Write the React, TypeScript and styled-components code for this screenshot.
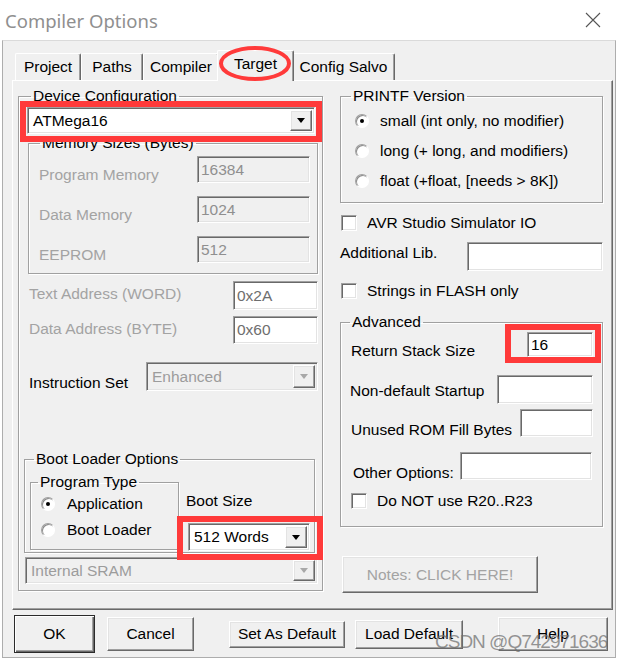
import React from "react";
import styled, { createGlobalStyle, css } from "styled-components";

const RED = "#ff3a3a";

const GlobalStyle = createGlobalStyle`
  * { box-sizing: border-box; }
  html, body { margin: 0; padding: 0; background: #fff; }
  body {
    font-family: "Liberation Sans", Arial, sans-serif;
    font-size: 15.5px;
    color: #000;
  }
`;

const sunken = css`
  border: 1px solid;
  border-color: #a0a0a0 #fff #fff #a0a0a0;
  box-shadow: inset 1px 1px 0 #696969, inset -1px -1px 0 #e3e3e3;
`;

const raised = css`
  border: 1px solid;
  border-color: #fff #696969 #696969 #fff;
  box-shadow: inset -1px -1px 0 #a0a0a0, inset 1px 1px 0 #e3e3e3;
`;

const Window = styled.div`
  position: relative;
  width: 619px;
  height: 661px;
  display: flex;
  flex-direction: column;
  background: #fff;
  overflow: hidden;
`;

const TitleBar = styled.div`
  height: 40px;
  flex: none;
  display: flex;
  align-items: center;
  justify-content: space-between;
  padding: 0 18px 0 5px;
`;

const Title = styled.span`
  font-family: "Noto Sans", "Liberation Sans", sans-serif;
  font-size: 18.5px;
  color: #8f8f8f;
`;

const CloseGlyph = styled.svg`
  width: 16px;
  height: 16px;
  stroke: #555;
  stroke-width: 1.1;
`;

const Client = styled.div`
  flex: 1;
  margin: 0 3px 3px 2px;
  background: #f0f0f0;
  border: 1px solid #adadad;
  border-top-color: #dadada;
  display: flex;
  flex-direction: column;
  padding: 9px 0 0 9px;
`;

const TabStrip = styled.div`
  display: flex;
  align-items: flex-end;
  height: 30px;
  padding-left: 3px;
`;

const Tab = styled.div<{ $w: number; $active?: boolean }>`
  position: relative;
  z-index: ${(p) => (p.$active ? 2 : 0)};
  flex: none;
  width: ${(p) => p.$w}px;
  height: ${(p) => (p.$active ? 31 : 27)}px;
  margin: ${(p) => (p.$active ? "0 -2px -1px" : "0")};
  padding-bottom: ${(p) => (p.$active ? 4 : 0)}px;
  display: flex;
  align-items: center;
  justify-content: center;
  background: #f0f0f0;
  border-top: 1px solid #fff;
  border-left: 1px solid #fff;
  border-right: 1px solid #696969;
  border-radius: 2px 2px 0 0;
  box-shadow: inset -1px 0 0 #a0a0a0;
  white-space: nowrap;
`;

const TabMark = styled.svg`
  position: absolute;
  left: 1px;
  top: -5px;
  width: 72px;
  height: 35px;
  pointer-events: none;
  overflow: visible;
`;

const Panel = styled.div`
  width: 601px;
  height: 530px;
  flex: none;
  display: flex;
  gap: 17px;
  padding: 7px 0 0 5px;
  border: 1px solid;
  border-color: #fff #696969 #696969 #fff;
  box-shadow: inset -1px -1px 0 #a0a0a0;
`;

const Column = styled.div<{ $w: number }>`
  width: ${(p) => p.$w}px;
  flex: none;
`;

const GroupBox = styled.fieldset<{ $w: number; $mt?: number; $ml?: number; $pb?: number }>`
  flex: none;
  width: ${(p) => p.$w}px;
  min-width: 0;
  margin: ${(p) => p.$mt ?? 0}px 0 0 ${(p) => p.$ml ?? 0}px;
  padding: 0 0 ${(p) => p.$pb ?? 0}px 0;
  border: 1px solid #a0a0a0;
  box-shadow: 1px 1px 0 #fff, inset 1px 1px 0 #fff;
`;

const Caption = styled.legend<{ $ml: number }>`
  margin-left: ${(p) => p.$ml}px;
  padding: 0 2px;
  line-height: 16px;
  white-space: nowrap;
`;

const Highlight = styled.div<{ $w?: number; $m: string; $pad: string }>`
  position: relative;
  z-index: 3;
  flex: none;
  width: ${(p) => (p.$w ? `${p.$w}px` : "auto")};
  margin: ${(p) => p.$m};
  padding: ${(p) => p.$pad};
  border: 6px solid ${RED};
`;

const ComboBox = styled.div<{ $w: number; $h: number; $off?: boolean; $ml?: number; $mt?: number }>`
  ${sunken};
  flex: none;
  width: ${(p) => p.$w}px;
  height: ${(p) => p.$h}px;
  margin: ${(p) => p.$mt ?? 0}px 0 0 ${(p) => p.$ml ?? 0}px;
  padding: 2px;
  display: flex;
  background: ${(p) => (p.$off ? "#f0f0f0" : "#fff")};
  color: ${(p) => (p.$off ? "#9c9c9c" : "#000")};
`;

const ComboText = styled.span`
  flex: 1;
  display: flex;
  align-items: center;
  padding-left: 3px;
  white-space: nowrap;
`;

const DropButton = styled.span<{ $off?: boolean }>`
  ${raised};
  width: 22px;
  background: #f0f0f0;
  display: flex;
  align-items: center;
  justify-content: center;
  &::after {
    content: "";
    border-left: 4.5px solid transparent;
    border-right: 4.5px solid transparent;
    border-top: 5px solid ${(p) => (p.$off ? "#a8a8a8" : "#000")};
  }
`;

const Field = styled.div<{ $w: number; $h: number; $off?: boolean; $tone?: string }>`
  ${sunken};
  flex: none;
  width: ${(p) => p.$w}px;
  height: ${(p) => p.$h}px;
  padding: 0 3px;
  display: flex;
  align-items: center;
  background: ${(p) => (p.$off ? "#f0f0f0" : "#fff")};
  color: ${(p) => p.$tone ?? "#000"};
`;

const FieldStack = styled.div`
  display: flex;
  flex-direction: column;
  gap: 12px;
  padding: 5px 7px 9px 10px;
`;

const FormRow = styled.div<{ $mt?: number; $pl?: number; $pr?: number }>`
  display: flex;
  justify-content: space-between;
  align-items: flex-start;
  margin-top: ${(p) => p.$mt ?? 0}px;
  padding: 0 ${(p) => p.$pr ?? 0}px 0 ${(p) => p.$pl ?? 0}px;
`;

const RowLabel = styled.span<{ $top?: number; $left?: number; $off?: boolean }>`
  padding-top: ${(p) => p.$top ?? 0}px;
  margin-left: ${(p) => p.$left ?? 0}px;
  line-height: 18px;
  white-space: nowrap;
  color: ${(p) => (p.$off ? "#a3a3a3" : "#000")};
`;

const ChoiceList = styled.div<{ $pad: string; $gap: number }>`
  display: flex;
  flex-direction: column;
  gap: ${(p) => p.$gap}px;
  padding: ${(p) => p.$pad};
`;

const Choice = styled.div<{ $h: number; $gap: number; $mt?: number; $ml?: number }>`
  display: flex;
  align-items: center;
  height: ${(p) => p.$h}px;
  gap: ${(p) => p.$gap}px;
  margin: ${(p) => p.$mt ?? 0}px 0 0 ${(p) => p.$ml ?? 0}px;
  white-space: nowrap;
`;

const RadioMark = styled.span<{ $on?: boolean }>`
  flex: none;
  width: 14px;
  height: 14px;
  border-radius: 50%;
  background: #fff;
  border: 1px solid;
  border-color: #a0a0a0 #fff #fff #a0a0a0;
  box-shadow: inset 1px 1px 0 #8a8a8a;
  display: flex;
  align-items: center;
  justify-content: center;
  &::after {
    content: "";
    width: 4px;
    height: 4px;
    border-radius: 50%;
    background: ${(p) => (p.$on ? "#000" : "transparent")};
  }
`;

const CheckMark = styled.span`
  ${sunken};
  flex: none;
  width: 16px;
  height: 16px;
  background: #fff;
`;

const BootRow = styled.div`
  display: flex;
  align-items: flex-start;
`;

const BootColumn = styled.div`
  flex: none;
  display: flex;
  flex-direction: column;
  margin: 25px 0 -9px 0;
`;

const PushButton = styled.button<{ $w: number; $h: number; $ml?: number; $mt?: number; $default?: boolean; $off?: boolean }>`
  ${raised};
  flex: none;
  width: ${(p) => p.$w}px;
  height: ${(p) => p.$h}px;
  margin: ${(p) => p.$mt ?? 0}px 0 0 ${(p) => p.$ml ?? 0}px;
  padding: 0;
  appearance: none;
  background: #f0f0f0;
  font: inherit;
  color: ${(p) => (p.$off ? "#a3a3a3" : "#000")};
  display: flex;
  align-items: center;
  justify-content: center;
  white-space: nowrap;
  ${(p) =>
    p.$default &&
    css`
      border-color: #2b2b2b;
      box-shadow: inset 1px 1px 0 #fff, inset -1px -1px 0 #696969, inset -2px -2px 0 #a0a0a0;
    `}
`;

const ButtonRow = styled.div`
  display: flex;
  align-items: center;
  height: 38px;
  margin: 5px 0 0 2px;
`;

const Watermark = styled.div`
  position: absolute;
  left: 435px;
  top: 631px;
  font-size: 19px;
  letter-spacing: -1px;
  color: rgba(110, 110, 110, 0.72);
  pointer-events: none;
  white-space: nowrap;
`;

const memory = [
  ["Program Memory", "16384"],
  ["Data Memory", "1024"],
  ["EEPROM", "512"],
];

const printf = [
  ["small (int only, no modifier)", true],
  ["long (+ long, and modifiers)", false],
  ["float (+float, [needs > 8K])", false],
] as const;

export default function App() {
  return (
    <>
      <GlobalStyle />
      <Window>
        <TitleBar>
          <Title>Compiler Options</Title>
          <CloseGlyph viewBox="0 0 16 16">
            <path d="M1 1 L15 15 M15 1 L1 15" />
          </CloseGlyph>
        </TitleBar>
        <Client>
          <TabStrip>
            <Tab $w={66}>Project</Tab>
            <Tab $w={62}>Paths</Tab>
            <Tab $w={76}>Compiler</Tab>
            <Tab $w={77} $active>
              Target
              <TabMark viewBox="0 0 72 35">
                <ellipse cx="36" cy="17.5" rx="34" ry="15.5" fill="none" stroke={RED} strokeWidth="4" />
              </TabMark>
            </Tab>
            <Tab $w={103}>Config Salvo</Tab>
          </TabStrip>

          <Panel>
            <Column $w={305}>
              <GroupBox $w={305} $pb={6}>
                <Caption $ml={12}>Device Configuration</Caption>
                <Highlight $w={302} $m="-3px 0 0 1px" $pad="0 1px 2px">
                  <ComboBox $w={288} $h={27}>
                    <ComboText>ATMega16</ComboText>
                    <DropButton />
                  </ComboBox>
                </Highlight>

                <GroupBox $w={290} $mt={-7} $ml={9}>
                  <Caption $ml={11}>Memory Sizes (Bytes)</Caption>
                  <FieldStack>
                    {memory.map(([label, value]) => (
                      <FormRow key={label}>
                        <RowLabel $top={10} $off>
                          {label}
                        </RowLabel>
                        <Field $w={113} $h={27} $off $tone="#8f8f8f">
                          {value}
                        </Field>
                      </FormRow>
                    ))}
                  </FieldStack>
                </GroupBox>

                <FormRow $mt={7} $pl={10} $pr={4}>
                  <RowLabel $top={4} $off>
                    Text Address (WORD)
                  </RowLabel>
                  <Field $w={85} $h={29} $tone="#6e6e6e">
                    0x2A
                  </Field>
                </FormRow>
                <FormRow $mt={6} $pl={10} $pr={4}>
                  <RowLabel $top={4} $off>
                    Data Address (BYTE)
                  </RowLabel>
                  <Field $w={85} $h={28} $tone="#6e6e6e">
                    0x60
                  </Field>
                </FormRow>
                <FormRow $mt={18} $pl={10} $pr={4}>
                  <RowLabel $top={12}>Instruction Set</RowLabel>
                  <ComboBox $w={172} $h={29} $off>
                    <ComboText>Enhanced</ComboText>
                    <DropButton $off />
                  </ComboBox>
                </FormRow>

                <GroupBox $w={291} $mt={59} $ml={5} $pb={1}>
                  <Caption $ml={9}>Boot Loader Options</Caption>
                  <BootRow>
                    <GroupBox $w={149} $mt={7} $ml={5} $pb={9}>
                      <Caption $ml={7}>Program Type</Caption>
                      <ChoiceList $pad="4px 0 0 10px" $gap={6}>
                        <Choice $h={20} $gap={12}>
                          <RadioMark $on />
                          Application
                        </Choice>
                        <Choice $h={20} $gap={12}>
                          <RadioMark />
                          Boot Loader
                        </Choice>
                      </ChoiceList>
                    </GroupBox>
                    <BootColumn>
                      <RowLabel $left={7}>Boot Size</RowLabel>
                      <Highlight $w={146} $m="6px 0 0 -2px" $pad="1px 7px 3px 5px">
                        <ComboBox $w={122} $h={28}>
                          <ComboText>512 Words</ComboText>
                          <DropButton />
                        </ComboBox>
                      </Highlight>
                    </BootColumn>
                  </BootRow>
                </GroupBox>

                <ComboBox $w={293} $h={27} $off $ml={6} $mt={4}>
                  <ComboText>Internal SRAM</ComboText>
                  <DropButton $off />
                </ComboBox>
              </GroupBox>
            </Column>

            <Column $w={263}>
              <GroupBox $w={263}>
                <Caption $ml={10}>PRINTF Version</Caption>
                <ChoiceList $pad="2px 0 6px 14px" $gap={0}>
                  {printf.map(([label, on]) => (
                    <Choice key={label} $h={30} $gap={11}>
                      <RadioMark $on={on} />
                      {label}
                    </Choice>
                  ))}
                </ChoiceList>
              </GroupBox>

              <Choice $h={18} $gap={10} $mt={11} $ml={1}>
                <CheckMark />
                AVR Studio Simulator IO
              </Choice>
              <FormRow $mt={10}>
                <RowLabel $top={2}>Additional Lib.</RowLabel>
                <Field $w={136} $h={29} />
              </FormRow>
              <Choice $h={18} $gap={10} $mt={11} $ml={1}>
                <CheckMark />
                Strings in FLASH only
              </Choice>

              <GroupBox $w={263} $mt={14} $pb={16}>
                <Caption $ml={9}>Advanced</Caption>
                <FormRow $mt={-6} $pl={10} $pr={1}>
                  <RowLabel $top={18}>Return Stack Size</RowLabel>
                  <Highlight $m="0" $pad="2px 2px 0 16px">
                    <Field $w={66} $h={25}>
                      16
                    </Field>
                  </Highlight>
                </FormRow>
                <FormRow $mt={12} $pl={9} $pr={9}>
                  <RowLabel $top={7}>Non-default Startup</RowLabel>
                  <Field $w={96} $h={29} />
                </FormRow>
                <FormRow $mt={5} $pl={10} $pr={9}>
                  <RowLabel $top={12}>Unused ROM Fill Bytes</RowLabel>
                  <Field $w={73} $h={28} />
                </FormRow>
                <FormRow $mt={13} $pl={12} $pr={10}>
                  <RowLabel $top={12}>Other Options:</RowLabel>
                  <Field $w={132} $h={28} />
                </FormRow>
                <Choice $h={18} $gap={10} $mt={10} $ml={10}>
                  <CheckMark />
                  Do NOT use R20..R23
                </Choice>
              </GroupBox>

              <PushButton $w={196} $h={37} $mt={29} $ml={2} $off>
                Notes: CLICK HERE!
              </PushButton>
            </Column>
          </Panel>

          <ButtonRow>
            <PushButton $w={81} $h={38} $default>
              OK
            </PushButton>
            <PushButton $w={87} $h={34} $ml={12}>
              Cancel
            </PushButton>
            <PushButton $w={116} $h={27} $ml={35}>
              Set As Default
            </PushButton>
            <PushButton $w={108} $h={29} $ml={10}>
              Load Default
            </PushButton>
            <PushButton $w={110} $h={34} $ml={35}>
              Help
            </PushButton>
          </ButtonRow>
        </Client>
        <Watermark>CSDN @Q742971636</Watermark>
      </Window>
    </>
  );
}
